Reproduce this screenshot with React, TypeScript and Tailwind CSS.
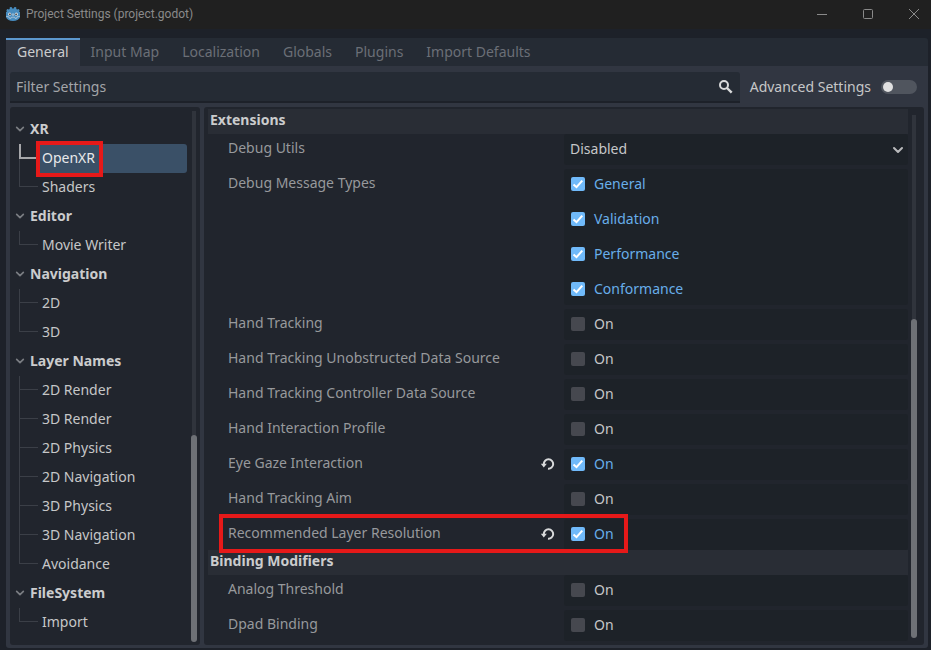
import { useState } from "react";
import type { ReactNode } from "react";

type Group = { name: string; children: string[] };
const groups: Group[] = [
  { name: "XR", children: ["OpenXR", "Shaders"] },
  { name: "Editor", children: ["Movie Writer"] },
  { name: "Navigation", children: ["2D", "3D"] },
  {
    name: "Layer Names",
    children: ["2D Render", "3D Render", "2D Physics", "2D Navigation", "3D Physics", "3D Navigation", "Avoidance"],
  },
  { name: "FileSystem", children: ["Import"] },
];

const tabs = ["General", "Input Map", "Localization", "Globals", "Plugins", "Import Defaults"];

type Toggle = { name: string; on?: boolean; marked?: boolean };
const extensions: Toggle[] = [
  { name: "Hand Tracking" },
  { name: "Hand Tracking Unobstructed Data Source" },
  { name: "Hand Tracking Controller Data Source" },
  { name: "Hand Interaction Profile" },
  { name: "Eye Gaze Interaction", on: true },
  { name: "Hand Tracking Aim" },
  { name: "Recommended Layer Resolution", on: true, marked: true },
];
const modifiers: Toggle[] = [{ name: "Analog Threshold" }, { name: "Dpad Binding" }];

function GodotLogo() {
  return (
    <svg viewBox="0 0 14 14" className="size-3.5" aria-hidden="true">
      <path
        d="M4.600 0l1.300.2.4 1.400h1.400l.4-1.400L9.400 0l.9.500v1.500l1 .6 1.300-.7L13.700 3.200l-.7 1.400 1 .3v5.300c-.8 2.300-3.500 3.700-7 3.700S.8 12.500 0 10.200V4.900l1-.3L.3 3.200 1.400 1.900l1.300.7 1-.6V.5z"
        fill="#478cbf"
      />
      <circle cx="3.700" cy="7.200" r="1.600" fill="#d5dde4" />
      <circle cx="10.300" cy="7.200" r="1.600" fill="#d5dde4" />
      <circle cx="3.900" cy="7.300" r=".9" fill="#414042" />
      <circle cx="10.100" cy="7.300" r=".9" fill="#414042" />
      <path d="M7 6.800v1.600" stroke="#e0e0e0" strokeWidth="1" strokeLinecap="round" />
      <path d="M.2 9.400l2.800.5.3 1.300 1.700.2.300-1.200h3.400l.3 1.200 1.700-.2.300-1.300 2.800-.5" fill="none" stroke="#b9cddd" strokeWidth=".8" />
    </svg>
  );
}

function Chevron({ className }: { className: string }) {
  return (
    <svg viewBox="0 0 12 12" className={className} fill="none" stroke="currentColor" strokeWidth="2" strokeLinecap="round" strokeLinejoin="round" aria-hidden="true">
      <path d="M2 4l4 4 4-4" />
    </svg>
  );
}

function Check({ label, on = false, name }: { label: string; on?: boolean; name?: string }) {
  const [checked, setChecked] = useState(on);
  return (
    <label className={`flex h-[31px] items-center gap-[9px] px-[7px] pb-px ${checked ? "text-[#68aeea]" : "text-[#c6c7c8]"}`}>
      <span className="grid size-3.5">
        <input
          type="checkbox"
          aria-label={name ? `${name}: ${label}` : label}
          checked={checked}
          onChange={(e) => setChecked(e.target.checked)}
          className="col-start-1 row-start-1 size-3.5 appearance-none rounded-[2px] bg-[#46484f] checked:bg-[#70bafa]"
        />
        {checked && (
          <svg viewBox="0 0 14 14" className="pointer-events-none col-start-1 row-start-1 size-3.5" fill="none" stroke="#fff" strokeWidth="2" aria-hidden="true">
            <path d="M2.500 7.500l3 2.700L11.300 3.600" />
          </svg>
        )}
      </span>
      <span>{label}</span>
    </label>
  );
}

function ResetButton({ name }: { name: string }) {
  return (
    <button type="button" aria-label={`Reset ${name}`} className="flex h-[31px] items-center pb-px text-[#d9dadb]">
      <svg viewBox="0 0 16 16" className="size-4" aria-hidden="true">
        <path d="M3.800 8.200a4.700 4.700 0 1 1 4.200 4.500" fill="none" stroke="currentColor" strokeWidth="2" />
        <path d="M.8 7.800h6L3.800 11.600z" fill="currentColor" />
      </svg>
    </button>
  );
}

function Property({ name, reset, children }: { name: string; reset?: boolean; children: ReactNode }) {
  return (
    <div className="flex">
      <div className="flex flex-1 items-start justify-between pr-2 pl-5">
        <span className="leading-7 text-[#97999c]">{name}</span>
        {reset && <ResetButton name={name} />}
      </div>
      <div className="w-[344px] rounded-[3px] bg-[#1d2228]">{children}</div>
    </div>
  );
}

function ToggleRow({ item }: { item: Toggle }) {
  return (
    <div className="relative">
      <Property name={item.name} reset={item.on}>
        <Check label="On" on={item.on} name={item.name} />
      </Property>
      {item.marked && (
        <div className="pointer-events-none absolute -top-[5px] right-[280px] -bottom-[3px] left-[11px] border-4 border-[#e61919]" />
      )}
    </div>
  );
}

function SectionHeader({ children }: { children: string }) {
  return <h2 className="h-[25px] bg-[#292d35] px-0.5 leading-[22px] font-bold text-[#cbcccd]">{children}</h2>;
}

function TreeChild({ name, selected, last }: { name: string; selected: boolean; last: boolean }) {
  return (
    <li className="flex h-[29px]">
      <div className="flex w-[19px] flex-col">
        {selected ? (
          <div className="h-[15px] border-b-2 border-l-2 border-[#a6a7aa]" />
        ) : (
          <div className="h-3.5 border-b border-l border-[#3b3f47]" />
        )}
        {!last && <div className="flex-1 border-l border-[#3b3f47]" />}
      </div>
      <button
        type="button"
        className={`relative flex-1 rounded-r-[3px] px-1 pb-px text-left ${selected ? "bg-[#3a5067] text-[#e8e9ea]" : "text-[#c6c7c8]"}`}
      >
        {name}
        {selected && <span className="pointer-events-none absolute -top-[3px] -left-0.5 h-9 w-[67px] border-4 border-[#e61919]" />}
      </button>
    </li>
  );
}

export default function App() {
  const [filter, setFilter] = useState("");
  return (
    <div className="flex min-h-screen flex-col bg-[#1d2129] font-['Noto_Sans',sans-serif] text-sm text-[#c6c7c8]">
      <header className="flex h-[29px] items-center bg-[#202020] pb-0.5 pl-1.5 text-[#8a8a8a]">
        <GodotLogo />
        <h1 className="ml-1.5 flex-1 font-['Roboto',sans-serif] text-xs">Project Settings (project.godot)</h1>
        <div className="flex items-center gap-3">
          <button type="button" aria-label="Minimize" className="flex w-[34px] justify-center">
            <svg viewBox="0 0 10 10" className="size-2.5" fill="none" stroke="currentColor" aria-hidden="true">
              <path d="M0 5.500h10" />
            </svg>
          </button>
          <button type="button" aria-label="Maximize" className="flex w-[34px] justify-center">
            <svg viewBox="0 0 10 10" className="size-2.5" fill="none" stroke="currentColor" aria-hidden="true">
              <rect x=".5" y=".5" width="9" height="9" rx="1" />
            </svg>
          </button>
          <button type="button" aria-label="Close" className="flex w-[34px] justify-center">
            <svg viewBox="0 0 10 10" className="size-2.5" fill="none" stroke="currentColor" aria-hidden="true">
              <path d="M0 0l10 10M10 0L0 10" />
            </svg>
          </button>
        </div>
      </header>

      <main className="mt-[9px] mr-[3px] mb-0.5 ml-1.5 flex flex-1 flex-col">
        <nav className="flex h-7 rounded-tr-[3px] bg-[#252b34]">
          {tabs.map((t, i) => (
            <button
              key={t}
              type="button"
              className={`border-t-2 pb-0.5 pl-[11px] ${i === 0 ? "border-[#5c98d0] bg-[#313641] pr-[11px] text-[#cbcccd]" : "border-transparent pr-3 text-[#6b6f77]"}`}
            >
              {t}
            </button>
          ))}
        </nav>

        <div className="flex flex-1 flex-col gap-1 rounded-b-[3px] bg-[#313641] px-1 pt-1.5 pb-[3px]">
          <div className="flex h-[31px] items-center">
            <div className="flex h-full flex-1 items-center rounded-t-[3px] border-b-2 border-[#1d2129] bg-[#252b34] pr-[7px]">
              <input
                type="text"
                aria-label="Filter Settings"
                placeholder="Filter Settings"
                value={filter}
                onChange={(e) => setFilter(e.target.value)}
                className="min-w-0 flex-1 bg-transparent px-1.5 outline-none placeholder:text-[#a3a5a9]"
              />
              <svg viewBox="0 0 14 14" className="size-3.5" fill="none" stroke="#d9dadb" strokeWidth="2" aria-hidden="true">
                <circle cx="5" cy="5" r="4" />
                <path d="M8 8l4.700 4.700" strokeWidth="2.400" />
              </svg>
            </div>
            <label className="flex items-center gap-2.5 pr-[7px] pb-0.5 pl-2.5">
              Advanced Settings
              <input
                type="checkbox"
                role="switch"
                className="flex h-3.5 w-9 appearance-none items-center rounded-full bg-[#50555e] px-0.5 before:size-2.5 before:rounded-full before:bg-[#e0e0e0] checked:justify-end"
              />
            </label>
          </div>

          <div className="flex flex-1 gap-1">
            <aside className="flex w-[190px] rounded-[3px] bg-[#21252d] pr-[3px]">
              <ul className="flex-1 py-2 pl-[5px]">
                {groups.map((g) => (
                  <li key={g.name}>
                    <button type="button" className="flex h-[29px] items-center gap-[5px] pb-px font-bold text-[#cbcccd]">
                      <Chevron className="size-2.5 text-[#7a7d82]" />
                      {g.name}
                    </button>
                    <ul className="pl-1">
                      {g.children.map((c, i) => (
                        <TreeChild key={c} name={c} selected={c === "OpenXR"} last={i === g.children.length - 1} />
                      ))}
                    </ul>
                  </li>
                ))}
              </ul>
              <div className="ml-1 flex w-1.5 flex-col items-center pt-1 pb-[3px]">
                <div className="w-1 flex-1 bg-[#30343c]" />
                <div className="h-[207px] w-1.5 rounded-full bg-[#6e7176]" />
              </div>
            </aside>

            <section className="flex flex-1 rounded-[3px] bg-[#21252d] pr-[7px] pl-1">
              <div className="flex-1 pt-0.5 pb-1">
                <SectionHeader>Extensions</SectionHeader>
                <div className="flex flex-col gap-1">
                  <Property name="Debug Utils">
                    <div className="grid h-[31px] items-center">
                      <select aria-label="Debug Utils" defaultValue="Disabled" className="col-start-1 row-start-1 h-full appearance-none px-1.5 pb-0.5">
                        <option>Disabled</option>
                      </select>
                      <Chevron className="pointer-events-none col-start-1 row-start-1 mr-1 size-3 justify-self-end text-[#b9babc]" />
                    </div>
                  </Property>
                  <Property name="Debug Message Types">
                    <div className="flex flex-col gap-1">
                      {["General", "Validation", "Performance", "Conformance"].map((m) => (
                        <Check key={m} label={m} on />
                      ))}
                    </div>
                  </Property>
                  {extensions.map((e) => (
                    <ToggleRow key={e.name} item={e} />
                  ))}
                </div>
                <SectionHeader>Binding Modifiers</SectionHeader>
                <div className="flex flex-col gap-1">
                  {modifiers.map((m) => (
                    <ToggleRow key={m.name} item={m} />
                  ))}
                </div>
              </div>
              <div className="ml-[3px] flex w-1.5 flex-col items-center pt-2 pb-[7px]">
                <div className="w-1 flex-1 bg-[#30343c]" />
                <div className="h-[319px] w-1.5 rounded-full bg-[#6e7176]" />
              </div>
            </section>
          </div>
        </div>
      </main>
    </div>
  );
}
